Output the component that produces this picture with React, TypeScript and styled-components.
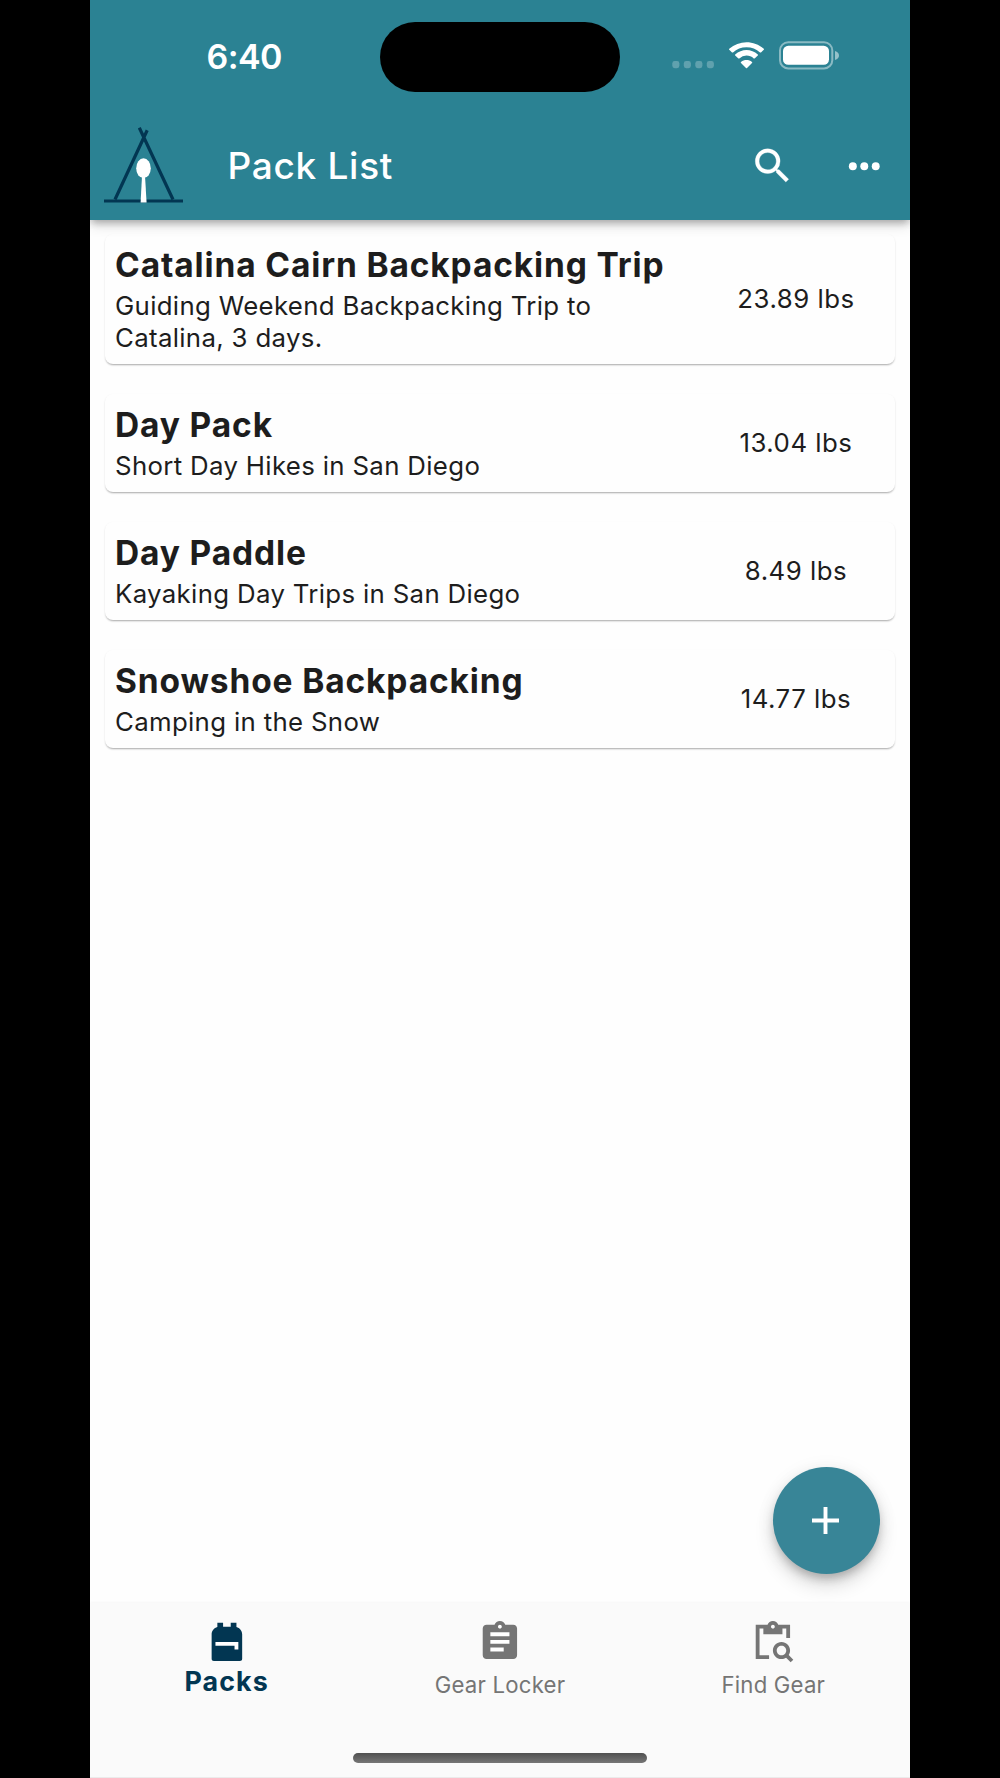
import React from 'react';
import styled, { createGlobalStyle } from 'styled-components';

const TEAL = '#2b8293';
const NAVY = '#023652';
const GREY = '#757575';

const GlobalStyle = createGlobalStyle`
  *, *::before, *::after { box-sizing: border-box; }
  body { margin: 0; background: #000; }
  h1, h2, p { margin: 0; }
  button { border: 0; padding: 0; background: none; font: inherit; color: inherit; }
  svg { display: block; flex: none; }
`;

const Stage = styled.div`
  display: flex;
  justify-content: center;
  height: 1778px;
  background: #000;
  overflow: hidden;
  font-family: Inter, 'Liberation Sans', sans-serif;
`;

const Phone = styled.div`
  position: relative;
  display: flex;
  flex-direction: column;
  width: 820px;
  height: 1778px;
  background: #fefefe;
  overflow: hidden;
`;

const Header = styled.header`
  position: relative;
  z-index: 1;
  flex: none;
  height: 219.5px;
  background: ${TEAL};
  color: #fff;
  box-shadow: 0 4px 8px -2px rgba(0, 0, 0, 0.2), 0 6px 12px rgba(0, 0, 0, 0.12), 0 2px 8px rgba(0, 0, 0, 0.12);
`;

const StatusBar = styled.div`
  display: grid;
  grid-template-columns: 290px 240px 290px;
  height: 113px;
  padding-top: 21.5px;
`;

const Clock = styled.span`
  padding-left: 116.5px;
  margin-top: 14.5px;
  font-size: 34px;
  line-height: 42px;
  font-weight: 600;
  letter-spacing: -0.6px;
`;

const Island = styled.div`
  height: 70px;
  border-radius: 35px;
  background: #000;
`;

const StatusIcons = styled.div`
  display: flex;
  align-items: flex-start;
  padding: 19.500px 0 0 52px;
`;

const Toolbar = styled.div`
  display: flex;
  align-items: center;
  height: 106px;
  padding-left: 14px;
`;

const ToolbarTitle = styled.h1`
  flex: 1;
  padding-left: 44.5px;
  font-size: 37px;
  line-height: 44px;
  font-weight: 500;
  letter-spacing: 0.7px;
  color: #fff;
`;

const IconButton = styled.button`
  display: flex;
  justify-content: center;
  align-items: center;
  width: 92px;
  height: 92px;
`;

const List = styled.main`
  display: flex;
  flex: 1;
  flex-direction: column;
  gap: 30px;
  padding: 14.5px 15px 0;
`;

const Card = styled.article<{ $tall?: boolean }>`
  display: flex;
  align-items: center;
  height: ${(p) => (p.$tall ? 130.3 : 97.8)}px;
  padding-left: 10px;
  border-radius: 8px;
  background: #fefefe;
  color: #1d1d1d;
  box-shadow: 0 2px 2px -1px rgba(0, 0, 0, 0.26), 0 1px 2px rgba(0, 0, 0, 0.1);
`;

const CardText = styled.div`
  flex: none;
  width: 580px;
`;

const PackName = styled.h2`
  margin-bottom: 4px;
  font-size: 33.5px;
  line-height: 42px;
  font-weight: 700;
  letter-spacing: 0.86px;
  white-space: nowrap;
`;

const PackNote = styled.p`
  max-width: 500px;
  font-size: 25.8px;
  line-height: 32.4px;
  letter-spacing: 0.33px;
`;

const Weight = styled.span`
  flex: none;
  width: 202px;
  font-size: 25.8px;
  line-height: 32px;
  letter-spacing: 0.5px;
  text-align: center;
`;

const AddButton = styled.button`
  position: absolute;
  right: 30.5px;
  bottom: 204px;
  display: flex;
  align-items: center;
  justify-content: center;
  width: 107px;
  height: 107px;
  border-radius: 50%;
  background: #388597;
  box-shadow: 0 6px 10px -2px rgba(0, 0, 0, 0.22), 0 11px 19px rgba(0, 0, 0, 0.14), 0 2px 20px rgba(0, 0, 0, 0.06);
`;

const TabBar = styled.nav`
  display: flex;
  flex: none;
  flex-direction: column;
  align-items: center;
  justify-content: space-between;
  height: 175px;
  padding: 16px 0 14px;
  background: #fafafa;
  border-bottom: 1px solid #ebebeb;
  box-shadow: 0 0 3px rgba(0, 0, 0, 0.06);
`;

const Tabs = styled.div`
  display: grid;
  grid-template-columns: repeat(3, 1fr);
  width: 100%;
`;

const Tab = styled.button<{ $active?: boolean }>`
  display: flex;
  flex-direction: column;
  align-items: center;
  color: ${(p) => (p.$active ? NAVY : GREY)};
  font-size: ${(p) => (p.$active ? 26.8 : 22.2)}px;
  font-weight: ${(p) => (p.$active ? 700 : 400)};
  letter-spacing: ${(p) => (p.$active ? 1.1 : 0.2)}px;
`;

const TabLabel = styled.span<{ $active?: boolean }>`
  margin-top: ${(p) => (p.$active ? 0 : 4)}px;
  line-height: 32px;
`;

const HomeIndicator = styled.div`
  width: 294px;
  height: 10px;
  border-radius: 5px;
  background: linear-gradient(#505050, #767676);
`;

const Logo = () => (
  <svg width="79" height="79" viewBox="0 0 79 79" fill="none" stroke={NAVY} strokeWidth="3.2">
    <path d="M0 74h79" />
    <path d="M11 72.5L43.2 3.3M69 72.5L35.3.7" />
    <ellipse cx="39.5" cy="41.2" rx="7.3" ry="9.9" fill="#fff" stroke="none" />
    <path d="M38 49h3l1.6 26.5h-6z" fill="#fff" stroke="none" />
  </svg>
);

const SignalDots = () => (
  <svg width="42" height="28" viewBox="0 0 42 28" fill="#fff" fillOpacity=".25">
    {[0, 11.5, 23, 34.5].map((x) => (
      <rect key={x} x={x + 0.3} y="20" width="7.1" height="7.2" rx="2.4" />
    ))}
  </svg>
);

const WifiGlyph = styled.svg`
  margin-left: 14px;
`;

const BatteryGlyph = styled.svg`
  margin-left: 14px;
`;

const Wifi = () => (
  <WifiGlyph width="37" height="28" viewBox="0 0 37 28" fill="#fff">
    <path d="M18.5 6.2c4.8 0 9.3 1.9 12.7 5.2.25.25.65.25.9 0l2.6-2.6a.7.7 0 0 0 0-1C25.6-1 11.4-1 2.3 7.8a.7.7 0 0 0 0 1l2.6 2.6c.25.25.65.25.9 0C9.2 8.1 13.700 6.200 18.5 6.2z" transform="translate(-1.2 0) scale(1.065 1)" />
    <path d="M18.5 14.6c2.7 0 5.2 1 7.2 2.8.3.25.7.25.9 0l3.2-3a.7.7 0 0 0 0-1c-6.4-6-16.2-6-22.6 0a.7.7 0 0 0 0 1l3.2 3c.25.25.65.25.9 0a10.7 10.7 0 0 1 7.2-2.8z" />
    <path d="M24 21.900a.65.65 0 0 0 0-1c-3.2-2.6-7.8-2.6-11 0a.65.65 0 0 0 0 1l5 5c.3.3.7.3 1 0z" />
  </WifiGlyph>
);

const Battery = () => (
  <BatteryGlyph width="61" height="29" viewBox="0 0 61 29">
    <rect x="1" y="1.2" width="52.3" height="26.3" rx="8.3" fill="none" stroke="#fff" strokeOpacity=".45" strokeWidth="2" />
    <rect x="4" y="4.8" width="46" height="19" rx="5.3" fill="#fff" />
    <path d="M56 10c2.500.8 4 2.4 4 4.5s-1.5 3.7-4 4.5z" fill="#fff" fillOpacity=".5" />
  </BatteryGlyph>
);

const MaterialIcon = ({ children }: { children: React.ReactNode }) => (
  <svg width="45.8" height="45.8" viewBox="0 0 24 24" fill="currentColor">
    {children}
  </svg>
);

const SearchIcon = () => (
  <MaterialIcon>
    <path
      stroke="currentColor"
      strokeWidth=".15"
      d="M15.8 14h-.79l-.28-.27A6.471 6.471 0 0 0 16.3 9.5 6.5 6.5 0 1 0 9.8 16c1.61 0 3.09-.59 4.23-1.57l.27.28v.79l5 4.99L20.79 19l-4.99-5zm-6 0C7.31 14 5.3 11.99 5.3 9.5S7.31 5 9.8 5s4.500 2.010 4.500 4.500S12.290 14 9.8 14z"
    />
  </MaterialIcon>
);

const MoreIcon = () => (
  <MaterialIcon>
    <circle cx="6.2" cy="12.2" r="2.08" />
    <circle cx="12.2" cy="12.2" r="2.08" />
    <circle cx="18.2" cy="12.2" r="2.08" />
  </MaterialIcon>
);

const BackpackIcon = () => (
  <MaterialIcon>
    <path fill="#fff" d="M5 11h14v6H5z" />
    <path fillRule="evenodd" d="M20 8v12.8c0 .7-.5 1.2-1.2 1.2H5.2c-.7 0-1.2-.5-1.2-1.2V8c0-1.86 1.28-3.41 3-3.86V2h3v2h4V2h3v2.14c1.72.45 3 2 3 3.86zM6 12v2h10v2h2v-4H6z" />
  </MaterialIcon>
);

const AssignmentIcon = () => (
  <MaterialIcon>
    <path fill="#fff" d="M6 6h12v12H6zM10.5 2.5h3v3h-3z" />
    <path fillRule="evenodd" d="M19 3h-4.18C14.4 1.84 13.3 1 12 1s-2.4.84-2.82 2H5c-1.1 0-2 .9-2 2v14c0 1.1.9 2 2 2h14c1.1 0 2-.9 2-2V5c0-1.1-.9-2-2-2zm-7 0c.55 0 1 .45 1 1s-.45 1-1 1-1-.45-1-1 .45-1 1-1zm2 14H7v-2h7v2zm3-4H7v-2h10v2zm0-4H7V7h10v2z" />
  </MaterialIcon>
);

const FindIcon = () => (
  <MaterialIcon>
    <path d="M10 19H5V5h2v3h10V5h2v5h2V3h-6.18C14.4 1.84 13.3 1 12 1s-2.4.84-2.82 2H3v18h7v-2zm2-16c.55 0 1 .45 1 1s-.45 1-1 1-1-.45-1-1 .45-1 1-1z" />
    <path d="M20.3 18.9c.4-.7.7-1.5.7-2.4 0-2.5-2-4.5-4.5-4.5S12 14 12 16.5s2 4.5 4.5 4.5c.9 0 1.7-.3 2.4-.7l2.4 2.4 1.4-1.4-2.4-2.4zM16.5 19c-1.4 0-2.5-1.1-2.5-2.5s1.1-2.5 2.5-2.5 2.5 1.1 2.5 2.5-1.1 2.5-2.5 2.5z" />
  </MaterialIcon>
);

const PlusIcon = () => (
  <svg width="28" height="28" viewBox="0 0 28 28" stroke="#fff" strokeWidth="3.9">
    <path d="M13.500 0v27M0 13.500h27" />
  </svg>
);

const packs = [
  { name: 'Catalina Cairn Backpacking Trip', note: 'Guiding Weekend Backpacking Trip to Catalina, 3 days.', weight: '23.89 lbs', tall: true },
  { name: 'Day Pack', note: 'Short Day Hikes in San Diego', weight: '13.04 lbs' },
  { name: 'Day Paddle', note: 'Kayaking Day Trips in San Diego', weight: '8.49 lbs' },
  { name: 'Snowshoe Backpacking', note: 'Camping in the Snow', weight: '14.77 lbs' },
];

const tabs = [
  { label: 'Packs', Icon: BackpackIcon, active: true },
  { label: 'Gear Locker', Icon: AssignmentIcon, active: false },
  { label: 'Find Gear', Icon: FindIcon, active: false },
];

export default function App() {
  return (
    <Stage>
      <GlobalStyle />
      <Phone>
        <Header>
          <StatusBar>
            <Clock>6:40</Clock>
            <Island />
            <StatusIcons>
              <SignalDots />
              <Wifi />
              <Battery />
            </StatusIcons>
          </StatusBar>
          <Toolbar>
            <Logo />
            <ToolbarTitle>Pack List</ToolbarTitle>
            <IconButton aria-label="Search"><SearchIcon /></IconButton>
            <IconButton aria-label="More"><MoreIcon /></IconButton>
          </Toolbar>
        </Header>
        <List>
          {packs.map((pack) => (
            <Card key={pack.name} $tall={pack.tall}>
              <CardText>
                <PackName>{pack.name}</PackName>
                <PackNote>{pack.note}</PackNote>
              </CardText>
              <Weight>{pack.weight}</Weight>
            </Card>
          ))}
        </List>
        <AddButton aria-label="Add pack"><PlusIcon /></AddButton>
        <TabBar>
          <Tabs>
            {tabs.map(({ label, Icon, active }) => (
              <Tab key={label} $active={active}>
                <Icon />
                <TabLabel $active={active}>{label}</TabLabel>
              </Tab>
            ))}
          </Tabs>
          <HomeIndicator />
        </TabBar>
      </Phone>
    </Stage>
  );
}
